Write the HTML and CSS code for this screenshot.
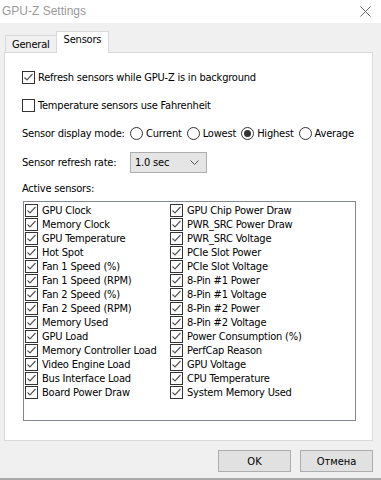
FILE: index.html
```html
<!DOCTYPE html>
<html lang="ru">
<head>
    <meta charset="UTF-8">
    <title>GPU-Z Settings</title>
    <link rel="stylesheet" href="styles.css">
</head>
<body>
    <div class="window">
        <div class="titlebar">
            <span class="title">GPU-Z Settings</span>
            <svg class="close" width="11" height="11" viewBox="0 0 11 11">
                <path d="M0.5 0.5 L10.5 10.5 M10.5 0.5 L0.5 10.5" stroke="#6a6a6a" stroke-width="1" fill="none"/>
            </svg>
        </div>

        <div class="tabs">
            <div class="tab">General</div>
            <div class="tab active">Sensors</div>
        </div>

        <div class="panel">
            <div class="check-row">
                <span class="box checked"></span>
                <span>Refresh sensors while GPU-Z is in background</span>
            </div>
            <div class="check-row second">
                <span class="box"></span>
                <span>Temperature sensors use Fahrenheit</span>
            </div>

            <div class="mode-row">
                <span class="mode-label">Sensor display mode:</span>
                <span class="radio"><span class="dot"></span>Current</span>
                <span class="radio"><span class="dot"></span>Lowest</span>
                <span class="radio"><span class="dot on"></span>Highest</span>
                <span class="radio"><span class="dot"></span>Average</span>
            </div>

            <div class="rate-row">
                <span class="rate-label">Sensor refresh rate:</span>
                <div class="select">
                    <span>1.0 sec</span>
                    <svg width="9" height="5" viewBox="0 0 9 5">
                        <path d="M0.5 0.5 L4.5 4.5 L8.5 0.5" stroke="#555" stroke-width="1" fill="none"/>
                    </svg>
                </div>
            </div>

            <div class="section-label">Active sensors:</div>

            <div class="sensor-list">
                <div class="col" id="colLeft"></div>
                <div class="col" id="colRight"></div>
            </div>
        </div>

        <div class="buttons">
            <button class="btn">OK</button>
            <button class="btn">Отмена</button>
        </div>
    </div>

    <script>
        // список датчиков
        const left = ["GPU Clock", "Memory Clock", "GPU Temperature", "Hot Spot", "Fan 1 Speed (%)",
            "Fan 1 Speed (RPM)", "Fan 2 Speed (%)", "Fan 2 Speed (RPM)", "Memory Used", "GPU Load",
            "Memory Controller Load", "Video Engine Load", "Bus Interface Load", "Board Power Draw"];
        const right = ["GPU Chip Power Draw", "PWR_SRC Power Draw", "PWR_SRC Voltage", "PCIe Slot Power",
            "PCIe Slot Voltage", "8-Pin #1 Power", "8-Pin #1 Voltage", "8-Pin #2 Power", "8-Pin #2 Voltage",
            "Power Consumption (%)", "PerfCap Reason", "GPU Voltage", "CPU Temperature", "System Memory Used"];

        function fill(id, items) {
            document.getElementById(id).innerHTML = items.map(name =>
                `<div class="item"><span class="box checked"></span><span>${name}</span></div>`
            ).join('');
        }

        fill('colLeft', left);
        fill('colRight', right);
    </script>
</body>
</html>
```

FILE: styles.css
```css
body {
    margin: 0;
    background-color: #f0f0f0;
    font-family: "DejaVu Sans Condensed", "Liberation Sans", sans-serif;
    font-size: 11px;
    letter-spacing: -0.2px;
    color: #000;
}

.window {
    width: 381px;
    height: 480px;
    box-sizing: border-box;
    border-bottom: 2px solid #a8a8a8;
    display: flex;
    flex-direction: column;
}

.titlebar {
    height: 23px;
    background: white;
    display: flex;
    align-items: center;
    justify-content: space-between;
    padding: 0 10px 2px 2px;
    box-sizing: border-box;
}

.title {
    font-family: "Liberation Sans", sans-serif;
    font-size: 12px;
    letter-spacing: 0;
    color: #999;
}

.close {
    margin-top: 1px;
}

.tabs {
    display: flex;
    align-items: flex-end;
    padding: 8px 0 0 5px;
    height: 29px;
    box-sizing: border-box;
    position: relative;
    z-index: 1;
}

.tab {
    height: 17px;
    padding: 0 6px;
    border: 1px solid #d9d9d9;
    border-bottom: none;
    box-sizing: border-box;
    line-height: 17px;
}

.tab.active {
    height: 22px;
    margin-bottom: -1px;
    margin-left: -1px;
    background: white;
    line-height: 16px;
    padding: 0 7px;
}

.panel {
    margin-left: 4px;
    width: 369px;
    height: 389px;
    box-sizing: border-box;
    background: white;
    border: 1px solid #d9d9d9;
    padding: 17px 0 0 17px;
}

.check-row {
    display: flex;
    align-items: center;
    height: 14px;
    gap: 3px;
}

.check-row.second {
    margin-top: 14px;
}

.box {
    width: 13px;
    height: 13px;
    box-sizing: border-box;
    border: 1px solid #333;
    background: white;
    flex-shrink: 0;
}

.box.checked {
    background: white url("data:image/svg+xml;utf8,<svg xmlns='http://www.w3.org/2000/svg' width='11' height='11'><path d='M1.5 5.5 L4 8 L9.5 2' stroke='%23555' stroke-width='1.2' fill='none'/></svg>") no-repeat center;
}

.mode-row {
    display: flex;
    align-items: center;
    height: 14px;
    margin-top: 14px;
}

.mode-label {
    width: 108px;
    flex-shrink: 0;
}

.radio {
    display: flex;
    align-items: center;
    gap: 3px;
    margin-right: 5px;
    flex-shrink: 0;
}

.dot {
    width: 13px;
    height: 13px;
    box-sizing: border-box;
    border: 1px solid #333;
    border-radius: 50%;
    background: white;
    position: relative;
}

.dot.on::after {
    content: "";
    position: absolute;
    left: 2px;
    top: 2px;
    width: 7px;
    height: 7px;
    border-radius: 50%;
    background: #333;
}

.rate-row {
    display: flex;
    align-items: center;
    margin-top: 12px;
}

.rate-label {
    width: 108px;
    flex-shrink: 0;
}

.select {
    width: 77px;
    height: 21px;
    box-sizing: border-box;
    background: #e5e5e5;
    border: 1px solid #adadad;
    display: flex;
    align-items: center;
    justify-content: space-between;
    padding: 0 7px 0 4px;
}

.section-label {
    margin-top: 9px;
    height: 14px;
    line-height: 14px;
}

.sensor-list {
    margin-top: 5px;
    margin-left: 1px;
    width: 333px;
    height: 220px;
    box-sizing: border-box;
    border: 1px solid #828790;
    display: flex;
    padding: 1px 0 0 1px;
}

.col {
    width: 145px;
}

.item {
    display: flex;
    align-items: center;
    height: 14px;
    gap: 4px;
}

.buttons {
    display: flex;
    justify-content: flex-end;
    gap: 9px;
    padding: 9px 8px 0 0;
}

.btn {
    width: 73px;
    height: 22px;
    background: #e1e1e1;
    border: 1px solid #adadad;
    font-family: "DejaVu Sans Condensed", "Liberation Sans", sans-serif;
    font-size: 11px;
    color: #000;
    padding: 0;
}
```
